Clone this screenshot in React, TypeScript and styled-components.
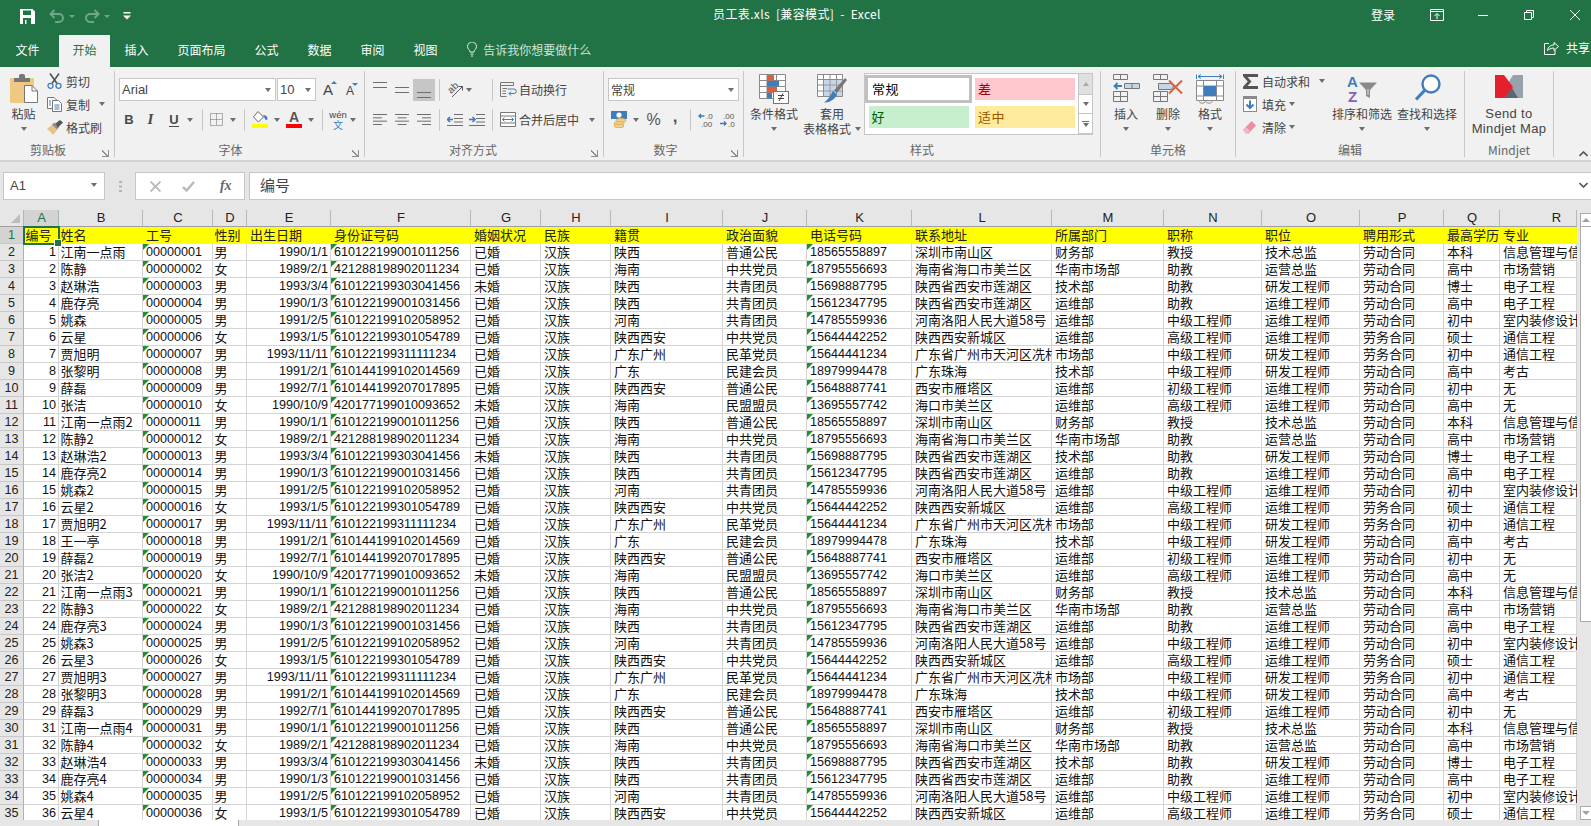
import React from 'react';
import styled, { createGlobalStyle } from 'styled-components';

const CJK = '"Noto Sans CJK SC", "Liberation Sans", sans-serif';
const SANS = '"Liberation Sans", "Noto Sans CJK SC", sans-serif';
const GREEN = '#217346';
const INK = '#444444';
const MID = '#6e6e6e';
const BLUE = '#3f7ebd';
const ORANGE = '#d9603b';

const Global = createGlobalStyle`
  html, body { margin: 0; padding: 0; background: #e6e6e6; }
  * { box-sizing: border-box; }
`;

const Page = styled.div`
  width: 1591px; height: 826px; overflow: hidden;
  display: flex; flex-direction: column;
  font-family: ${CJK}; font-size: 12px; color: ${INK};
`;

/* ---------- title + tabs ---------- */
const TitleBar = styled.div`
  height: 35px; flex: none; background: ${GREEN}; color: #fff;
  display: grid; grid-template-columns: 1fr auto 1fr; align-items: center;
`;
const Quick = styled.div`display: flex; align-items: center; padding: 0 0 3px 20px;`;
const QuickSlot = styled.span<{ $w: number }>`
  width: ${p => p.$w}px; flex: none; display: flex; align-items: center; justify-content: flex-start;
`;
const DimCaret = styled.span`
  width: 0; height: 0; border-left: 3px solid transparent; border-right: 3px solid transparent;
  border-top: 3px solid #6fa68a;
`;
const DocTitle = styled.div`white-space: pre; font-size: 12px; line-height: 16px; padding: 0 0 7px 3px; letter-spacing: 0.35px;`;
const WinControls = styled.div`display: flex; justify-content: flex-end; align-items: center; margin-right: -7px; padding-bottom: 6px;`;
const Login = styled.span`margin-right: 19px;`;
const WinBtn = styled.span`width: 46px; display: flex; justify-content: center; align-items: center;`;

const TabBar = styled.div`
  height: 32px; flex: none; background: ${GREEN}; display: flex; align-items: stretch; color: #fff;
`;
const Tab = styled.div<{ $active?: boolean }>`
  padding: 0 ${p => (p.$active ? '13.5px' : '14.5px')};
  display: flex; align-items: center; white-space: nowrap; padding-bottom: 3px;
  background: ${p => (p.$active ? '#f1f1f1' : 'transparent')};
  color: ${p => (p.$active ? GREEN : '#fff')};
`;
const FileTab = styled(Tab)`margin: 0 5px 0 1px;`;
const TellMe = styled.div`
  display: flex; align-items: center; gap: 6px; padding: 0 0 3px 15px; color: #cfe3d8;
`;
const Share = styled.div`
  margin-left: auto; display: flex; align-items: center; gap: 7px; padding-bottom: 7px; margin-right: 1px;
`;

/* ---------- ribbon ---------- */
const Ribbon = styled.div`
  height: 95px; flex: none; background: #f1f1f1; border-bottom: 2px solid #d2d2d2;
  display: flex; padding-top: 4px; position: relative;
`;
const Group = styled.div<{ $w: number }>`
  width: ${p => p.$w}px; flex: none; height: 86px; border-right: 1px solid #c8c8c8;
  display: flex; flex-direction: column; position: relative;
`;
const GroupBody = styled.div<{ $pl?: number; $center?: boolean }>`
  height: 72px; display: flex; padding-left: ${p => p.$pl ?? 0}px;
  justify-content: ${p => (p.$center ? 'center' : 'flex-start')};
`;
const GroupLabel = styled.div<{ $pr?: number }>`
  height: 14px; line-height: 14px; text-align: center; color: #666; white-space: nowrap;
  padding-right: ${p => p.$pr ?? 0}px;
`;
const Launcher = styled.span`
  position: absolute; right: 5px; bottom: 0; width: 7px; height: 7px;
  border-left: 1px solid #8e8e8e; border-bottom: 1px solid #8e8e8e;
  background: linear-gradient(135deg, transparent 45%, #8e8e8e 45%, #8e8e8e 60%, transparent 60%);
  transform: scaleX(-1);
`;
const Large = styled.div<{ $w: number }>`
  width: ${p => p.$w}px; flex: none; display: flex; flex-direction: column; align-items: center;
  padding-top: 3px;
`;
const LargeIcon = styled.div`height: 32px; display: flex; align-items: flex-start; justify-content: center;`;
const LargeText = styled.div`
  line-height: 15px; height: 15px; white-space: nowrap; text-align: center;
  display: flex; align-items: center; gap: 4px; justify-content: center;
`;
const LatinLarge = styled(LargeText)`font-family: ${SANS}; font-size: 13px; letter-spacing: 0.35px;`;
const Caret = styled.span`
  display: inline-block; flex: none; width: 0; height: 0;
  border-left: 3.5px solid transparent; border-right: 3.5px solid transparent; border-top: 4px solid ${MID};
`;
const Stack = styled.div<{ $w: number }>`
  width: ${p => p.$w}px; flex: none; display: flex; flex-direction: column; gap: 3px;
`;
const SmallRow = styled.div`height: 20px; display: flex; align-items: center; white-space: nowrap;`;
const SmallIcon = styled.span<{ $w?: number }>`
  width: ${p => p.$w ?? 19}px; flex: none; display: flex; align-items: center;
`;
const SmallCaret = styled.span<{ $ml: number }>`margin-left: ${p => p.$ml}px; display: flex;`;
const Rows = styled.div`display: flex; flex-direction: column; gap: 7px; padding-top: 7px;`;
const ToolRow = styled.div`height: 23px; display: flex; align-items: center; white-space: nowrap;`;
const Slot = styled.span<{ $w: number; $active?: boolean }>`
  width: ${p => p.$w}px; height: 22px; flex: none; display: flex; align-items: center; justify-content: center;
  background: ${p => (p.$active ? '#c6c6c6' : 'transparent')};
`;
const Sep = styled.span<{ $w: number }>`
  width: ${p => p.$w}px; flex: none; height: 22px; display: flex; justify-content: center;
  &::before { content: ''; width: 1px; height: 100%; background: #c8c8c8; }
`;
const Spacer = styled.span<{ $w: number }>`width: ${p => p.$w}px; flex: none;`;
const Select = styled.div<{ $w: number }>`
  width: ${p => p.$w}px; height: 23px; flex: none; background: #fff; border: 1px solid #c6c6c6;
  display: flex; align-items: center; justify-content: space-between; padding: 0 4px 0 2px;
  font-family: ${SANS}; font-size: 13px; color: ${INK};
`;
const CnSelect = styled(Select)`font-family: ${CJK}; font-size: 12px;`;
const FontAdjust = styled.span`position: relative; font-family: ${SANS}; font-size: 15px; color: ${INK}; line-height: 15px;`;
const SmallA = styled(FontAdjust)`font-size: 12px; margin-top: 3px;`;
const TinyArrow = styled.span<{ $down?: boolean }>`
  position: absolute; right: -4px; top: -1px; width: 0; height: 0;
  border-left: 3px solid transparent; border-right: 3px solid transparent;
  ${p => (p.$down ? `border-top: 3px solid ${BLUE};` : `border-bottom: 3px solid ${BLUE};`)}
`;
const StyleLetter = styled.span<{ $kind: 'b' | 'i' | 'u' }>`
  font-family: ${p => (p.$kind === 'i' ? '"Liberation Serif", serif' : SANS)};
  font-size: ${p => (p.$kind === 'i' ? 15 : 13)}px; font-weight: 700; color: #4a4a4a;
  font-style: ${p => (p.$kind === 'i' ? 'italic' : 'normal')};
  border-bottom: ${p => (p.$kind === 'u' ? '1.5px solid #4a4a4a' : 'none')};
  line-height: 13px;
`;
const ColorA = styled.span`
  width: 16px; display: flex; justify-content: center; font-family: ${SANS}; font-weight: 700;
  font-size: 14px; line-height: 13px; color: #555; border-bottom: 4px solid #f00;
`;
const Phonetic = styled.span`display: flex; flex-direction: column; align-items: center; line-height: 10px;`;
const Wen = styled.span`font-family: ${SANS}; font-size: 9.5px; color: #444;`;
const WenCn = styled.span`font-size: 10px; color: ${BLUE};`;
const Percent = styled.span`font-family: ${SANS}; font-size: 16px; color: #555;`;
const Comma = styled.span`font-family: ${SANS}; font-size: 17px; font-weight: 700; color: #555; line-height: 12px; margin-top: -6px;`;
const Gallery = styled.div`
  width: 229px; height: 62px; margin-top: 2px; flex: none; background: #fff; border: 1px solid #c6c6c6;
  display: flex; justify-content: space-between;
`;
const StyleGrid = styled.div`
  display: grid; grid-template-columns: 107px 100px; grid-template-rows: 28px 22px; gap: 3px;
  padding-top: 1px;
`;
const StyleCell = styled.div<{ $bg: string; $fg: string; $sel?: boolean }>`
  background: ${p => p.$bg}; color: ${p => p.$fg}; font-size: 13px; display: flex; align-items: center;
  width: ${p => (p.$sel ? 107 : 100)}px; height: ${p => (p.$sel ? 28 : 22)}px;
  align-self: center; justify-self: center; padding: 0 0 1px ${p => (p.$sel ? 4 : 3)}px;
  letter-spacing: 0.5px;
  border: ${p => (p.$sel ? '3px solid #c0c0c0' : 'none')};
`;
const GalleryScroll = styled.div`width: 14px; flex: none; display: flex; flex-direction: column; border-left: 1px solid #c6c6c6;`;
const GalleryBtn = styled.div<{ $h: number; $bg: string }>`
  height: ${p => p.$h}px; background: ${p => p.$bg}; border-bottom: 1px solid #c6c6c6;
  display: flex; align-items: center; justify-content: center; flex-direction: column; gap: 1px;
`;
const UpTri = styled.span`
  width: 0; height: 0; border-left: 3.5px solid transparent; border-right: 3.5px solid transparent;
  border-bottom: 4px solid #a8a8a8;
`;
const DashBar = styled.span`width: 7px; height: 1px; background: ${MID};`;
const Collapse = styled.span`position: absolute; right: 3px; bottom: 3px; display: flex;`;

/* ---------- formula bar ---------- */
const FormulaBar = styled.div`
  height: 48px; flex: none; padding: 10px 0 10px 3px; display: flex; align-items: stretch; background: #e6e6e6;
`;
const NameBox = styled.div`
  width: 102px; background: #fff; border: 1px solid #c6c6c6; display: flex; align-items: center;
  justify-content: space-between; padding: 0 7px 2px 6px; font-family: ${SANS}; font-size: 13px; color: ${INK};
`;
const Grip = styled.span`width: 30px; display: flex; align-items: center; justify-content: center;`;
const FxBox = styled.div`
  width: 110px; background: #fff; border: 1px solid #c6c6c6; display: flex; align-items: center;
  justify-content: space-around; padding: 0 2px 0 4px; margin-right: 4px;
`;
const FxText = styled.span`font-family: "Liberation Serif", serif; font-style: italic; font-weight: 700; font-size: 14px; color: #666; margin-left: 4px;`;
const FormulaInput = styled.div`
  flex: 1; background: #fff; border: 1px solid #c6c6c6; border-right: none; display: flex; align-items: center;
  justify-content: space-between; padding: 0 3px 3px 10px; font-size: 15px; color: ${INK};
`;

/* ---------- sheet ---------- */
const SheetArea = styled.div`height: 610px; flex: none; display: flex; background: #e6e6e6; overflow: hidden;`;
const GridWrap = styled.div`width: 1577px; flex: none; position: relative; overflow: hidden;`;
const COLS = [24, 35, 84, 70, 34, 84, 140, 70, 70, 112, 84, 105, 140, 112, 98, 98, 84, 56, 77];
const SheetGrid = styled.div`
  display: grid; grid-template-columns: ${COLS.map(c => `${c}px`).join(' ')}; grid-auto-rows: 17px;
  background: #fff; border-right: 1px solid #a0a0a0;
`;
const Corner = styled.div`
  background: #e6e6e6; border-right: 1px solid #b4b4b4; border-bottom: 1px solid #a0a0a0; position: relative;
  &::after {
    content: ''; position: absolute; right: 3px; bottom: 3px; width: 0; height: 0;
    border-left: 9px solid transparent; border-bottom: 9px solid #bcbcbc;
  }
`;
const ColHead = styled.div<{ $sel?: boolean; $shift?: number }>`
  background: ${p => (p.$sel ? '#d3d3d3' : '#e6e6e6')}; color: ${p => (p.$sel ? GREEN : '#222')};
  border-right: 1px solid ${p => (p.$sel ? '#9fb8aa' : '#b8b8b8')};
  border-bottom: 1px solid #a0a0a0;
  font-family: ${SANS}; font-size: 13px; line-height: 16px; text-align: center;
  padding-left: ${p => p.$shift ?? 1}px;
`;
const RowHead = styled.div<{ $sel?: boolean }>`
  background: ${p => (p.$sel ? '#d3d3d3' : '#e6e6e6')}; color: ${p => (p.$sel ? GREEN : '#222')};
  border-right: 1px solid #b0b0b0; border-bottom: 1px solid #c8c8c8;
  font-family: ${SANS}; font-size: 12.6px; line-height: 16px; text-align: center;
`;
const Cell = styled.div<{ $right?: boolean; $num?: boolean; $flag?: boolean; $tight?: boolean }>`
  position: relative; white-space: nowrap; background: #fff; color: #111;
  border-right: 1px solid #d4d4d4; border-bottom: 1px solid #d4d4d4;
  font-family: ${p => (p.$num ? SANS : CJK)}; font-size: ${p => (p.$num ? 12.6 : 13)}px; line-height: 16px;
  padding: 0 ${p => (p.$right ? 2 : 0)}px 0 ${p => (p.$right ? 0 : p.$tight ? 1.5 : 3)}px;
  text-align: ${p => (p.$right ? 'right' : 'left')};
  ${p => p.$flag && `
    &::before {
      content: ''; position: absolute; left: 0; top: 0; width: 0; height: 0;
      border-top: 6px solid #1f8f2f; border-right: 6px solid transparent;
    }
  `}
`;
const HeadCell = styled.div<{ $tight?: boolean }>`
  white-space: nowrap; background: #ffff00; color: #222; padding-left: ${p => (p.$tight ? 1.5 : 3)}px;
  font-size: 13px; line-height: 16px;
`;
const Selection = styled.div`
  position: absolute; left: 23px; top: 16px; width: 37px; height: 19px; border: 2px solid ${GREEN};
  &::after {
    content: ''; position: absolute; right: -4px; bottom: -4px; width: 6px; height: 6px;
    background: ${GREEN}; border: 1px solid #fff;
  }
`;
const VScroll = styled.div`
  margin-left: 3px; margin-top: 3px; width: 11px; flex: none; display: flex; flex-direction: column;
`;
const ScrollBtn = styled.div`
  height: 14px; flex: none; background: #fff; border: 1px solid #ababab; border-right: none;
  display: flex; align-items: center; justify-content: center;
`;
const VThumb = styled.div`height: 395px; flex: none; background: #fff; border: 1px solid #ababab; border-top: none; border-right: none;`;
const VTrack = styled.div`flex: 1;`;
const DownTri = styled.span`
  width: 0; height: 0; border-left: 4px solid transparent; border-right: 4px solid transparent;
  border-top: 4px solid #a0a0a0;
`;
const UpScrollTri = styled.span`
  width: 0; height: 0; border-left: 4px solid transparent; border-right: 4px solid transparent;
  border-bottom: 4px solid #a0a0a0;
`;
const HScroll = styled.div`
  height: 6px; flex: none; display: flex; background: #e6e6e6; padding-left: 98px;
`;
const HThumb = styled.div`
  width: 141px; background: #fff; border: 1px solid #ababab; border-bottom: none; border-top: none;
`;

/* ---------- drawn icons ---------- */
const Ln = ({ d, c = MID, w = 1 }: { d: string; c?: string; w?: number }) => (
  <path d={d} stroke={c} strokeWidth={w} fill="none" />
);
const SaveIcon = () => (
  <svg width="15" height="15" viewBox="0 0 15 15">
    <path fill="#fff" fillRule="evenodd" d="M0 0h12.5L15 2.5V15H0zM3 1.5V6h8V1.5zM3 9v6h2v-4h1.5v4H11V9z" />
  </svg>
);
const UndoIcon = ({ flip }: { flip?: boolean }) => (
  <svg width="16" height="14" viewBox="0 0 16 14" style={flip ? { transform: 'scaleX(-1)' } : undefined}>
    <Ln d="M5.5 1L1.5 5L5.5 9" c="#6fa68a" w={2} />
    <Ln d="M2 5H10A4 4 0 0 1 10 13H6" c="#6fa68a" w={2} />
  </svg>
);
const CustomizeIcon = () => (
  <svg width="8" height="8" viewBox="0 0 8 8"><rect width="7" height="1.5" x="0.5" fill="#fff" /><path d="M0 3.5H8L4 7.5z" fill="#fff" /></svg>
);
const RibbonOptIcon = () => (
  <svg width="14" height="12" viewBox="0 0 14 12">
    <Ln d="M.5.5H13.500V11.500H.5zM.5 2.500H13.500" c="#fff" /><Ln d="M7 10V5M4.500 7L7 4.500L9.500 7" c="#fff" />
  </svg>
);
const MinIcon = () => <svg width="10" height="10" viewBox="0 0 10 10"><Ln d="M0 5.500H10" c="#fff" /></svg>;
const MaxIcon = () => (
  <svg width="10" height="10" viewBox="0 0 10 10"><Ln d="M.5 2.500H7.500V9.500H.5zM2.500 2.500V.5H9.500V7.500H7.500" c="#fff" /></svg>
);
const CloseIcon = () => <svg width="10" height="10" viewBox="0 0 10 10"><Ln d="M0 0L10 10M10 0L0 10" c="#fff" /></svg>;
const BulbIcon = () => (
  <svg width="10" height="15" viewBox="0 0 10 15">
    <Ln d="M3 10C3 8 .5 7 .5 4.500A4.500 4.500 0 0 1 9.500 4.500C9.500 7 7 8 7 10zM3.500 12H6.500M4 14H6" c="#e4efe9" />
  </svg>
);
const ShareIcon = () => (
  <svg width="15" height="14" viewBox="0 0 15 14">
    <Ln d="M5 2.500H.5V13.500H11V9" c="#fff" /><Ln d="M3.500 9.500C4 5.500 7 4 10 4V1.500L14.500 5.500L10 9.500V7C7.500 7 5 8 3.500 9.500z" c="#fff" />
  </svg>
);
const PasteIcon = () => (
  <svg width="28" height="29" viewBox="0 0 28 29">
    <rect y="4" width="24" height="25" rx="1" fill="#efc981" />
    <path d="M4 4H9V1.500Q9 0 11 0H13Q15 0 15 1.500V4H20V8H4z" fill="#777" />
    <path d="M14.500 11.500H22L27.500 17V28.500H14.500z" fill="#fff" stroke="#777" />
    <path d="M22 11.500V17H27.500" fill="none" stroke="#777" />
  </svg>
);
const CutIcon = () => (
  <svg width="15" height="16" viewBox="0 0 15 16">
    <Ln d="M3 .5L10 10.500M12 .5L5 10.500" c="#555" w={1.6} />
    <circle cx="3.500" cy="12.800" r="2.500" fill="none" stroke={BLUE} strokeWidth="1.300" />
    <circle cx="11.500" cy="12.800" r="2.500" fill="none" stroke={BLUE} strokeWidth="1.300" />
  </svg>
);
const CopyIcon = () => (
  <svg width="15" height="15" viewBox="0 0 15 15">
    <path d="M.5.5H7L9.500 3V11.500H.5z" fill="#fff" stroke="#777" />
    <path d="M5.500 3.500H11.500L14.500 6.500V14.500H5.500z" fill="#fff" stroke="#777" />
    <Ln d="M2 4H4M2 6H4M2 8H4M7.500 8H12.500M7.500 10H12.500M7.500 12H12.500" c={BLUE} />
  </svg>
);
const BrushIcon = () => (
  <svg width="16" height="15" viewBox="0 0 16 15">
    <path d="M0 9L5.500 4.500L10.500 9.500L6 15Q4 12 0 9z" fill="#eac282" />
    <path d="M5 4.500L7.500 2.500L12 7L10 9.500z" fill="#8a8a8a" />
    <path d="M8.500 3.500L13 0L16 2.500L11 7.500z" fill="#555" />
  </svg>
);
const BorderIcon = () => (
  <svg width="13" height="13" viewBox="0 0 13 13">
    <path d="M.5.5H12.500V12.500H.5zM.5 6.500H12.500M6.500.5V12.500" fill="none" stroke="#666" strokeDasharray="1 1" />
  </svg>
);
const BucketIcon = () => (
  <svg width="16" height="17" viewBox="0 0 16 17">
    <path d="M6 .5L11.500 6L6.500 11L1.500 6z" fill="#fff" stroke="#666" />
    <path d="M11 4.500C13 3.500 15.500 5 15.500 7.500C15.500 9 14 9.500 13.500 8.500z" fill={BLUE} />
    <rect y="13" width="16" height="4" fill="#ffff00" />
  </svg>
);
const VAlignIcon = ({ y }: { y: number }) => (
  <svg width="14" height="18" viewBox="0 0 14 18"><Ln d={`M0 ${y}.5H14M0 ${y + 5}.5H14`} /></svg>
);
const HAlignIcon = ({ a }: { a: 'l' | 'c' | 'r' }) => {
  const x = (w: number) => (a === 'l' ? 0 : a === 'c' ? (14 - w) / 2 : 14 - w);
  const widths = [14, 9, 14, 9];
  return (
    <svg width="14" height="11" viewBox="0 0 14 11">
      {widths.map((w, i) => <Ln key={i} d={`M${x(w)} ${i * 3.33 + 0.5}h${w}`} />)}
    </svg>
  );
};
const OrientIcon = () => (
  <svg width="17" height="17" viewBox="0 0 17 17">
    <text x="1" y="11" fontFamily="Liberation Sans" fontSize="10" fill="#555" transform="rotate(-45 5 8)">ab</text>
    <Ln d="M5 16L15.500 5.500M11.500 5.500H15.500V9.500" c="#555" />
  </svg>
);
const IndentIcon = ({ inc }: { inc?: boolean }) => (
  <svg width="16" height="12" viewBox="0 0 16 12">
    <Ln d="M7 .5H16M7 4.500H16M7 8H16M0 11.500H16" c={MID} />
    {inc
      ? <Ln d="M0 5.500H6M3.500 3L6 5.500L3.500 8" c={BLUE} w={1.6} />
      : <Ln d="M6 5.500H.5M3 3L.5 5.500L3 8" c={BLUE} w={1.6} />}
  </svg>
);
const WrapIcon = () => (
  <svg width="17" height="15" viewBox="0 0 17 15">
    <Ln d="M.5.5H13.500V3.500H.5zM.5 3.500V14.500H6.500M2.500 6.500H7M2.500 9H6M2.500 11.500H6" c="#777" />
    <Ln d="M7.500 7H14A2 2 0 0 1 14 11.500H9M11 9.500L9 11.500L11 13.500" c={BLUE} />
  </svg>
);
const MergeIcon = () => (
  <svg width="16" height="15" viewBox="0 0 16 15">
    <path d="M.5.5H15.500V14.500H.5zM.5 4H15.500M.5 11H15.500" fill="#fff" stroke="#777" />
    <Ln d="M2.500 7.500H13.500M4.500 5.500L2.500 7.500L4.500 9.500M11.500 5.500L13.500 7.500L11.500 9.500" c={BLUE} />
  </svg>
);
const MoneyIcon = () => (
  <svg width="16" height="17" viewBox="0 0 16 17">
    <rect width="16" height="8" fill={BLUE} />
    <circle cx="8" cy="4" r="2.600" fill="#fff" />
    <ellipse cx="10" cy="9.500" rx="5" ry="2" fill="#f1d08f" stroke="#e2b15e" />
    <ellipse cx="8" cy="12.500" rx="5" ry="2" fill="#f1d08f" stroke="#e2b15e" />
    <ellipse cx="8" cy="15" rx="5" ry="1.800" fill="#f1d08f" stroke="#e2b15e" />
  </svg>
);
const DecIcon = ({ more }: { more?: boolean }) => (
  <svg width="15" height="14" viewBox="0 0 15 14">
    <g fontFamily="Liberation Sans" fontSize="8" fill="#555">
      <text x={more ? 8 : 3} y="6">{more ? '.0' : '.00'}</text>
      <text x={more ? 3 : 8} y="13.500">{more ? '.00' : '.0'}</text>
    </g>
    {more
      ? <Ln d="M6.500 3H1M3 1L1 3L3 5" c={BLUE} w={1.4} />
      : <Ln d="M0 10.500H6M4 8.500L6 10.500L4 12.500" c={BLUE} w={1.4} />}
  </svg>
);
const CondIcon = () => (
  <svg width="30" height="30" viewBox="0 0 30 30">
    <path d="M.5.5H26.500V24.500H.5zM.5 6.500H26.500M.5 12.500H26.500M.5 18.500H26.500M8 .5V24.500M17.500 .5V18" fill="#fff" stroke="#8a8a8a" />
    <rect x="8" y="1" width="7" height="5.500" fill={ORANGE} />
    <rect x="8" y="7" width="12" height="5.500" fill={BLUE} />
    <rect x="8" y="13" width="10" height="5.500" fill={ORANGE} />
    <rect x="8" y="19" width="5" height="5.500" fill={BLUE} />
    <rect x="14.500" y="17.500" width="15" height="12" fill="#fff" stroke="#777" />
    <Ln d="M19 21.500H25M19 24.500H25M24 19.500L20 27" c="#444" />
  </svg>
);
const TableFormatIcon = () => (
  <svg width="30" height="30" viewBox="0 0 30 30">
    <path d="M.5.5H25.500V22.500H.5zM.5 5.500H25.500M.5 11H25.500M.5 17H25.500M6.500.5V22.500M13 .5V22.500M19.500 .5V22.500" fill="#fff" stroke="#8a8a8a" />
    <rect x="7" y="6" width="18" height="16" fill="#c5d5ea" />
    <Ln d="M7 11H25M7 17H25M13 6V22M19.500 6V22" c="#9a9a9a" />
    <path d="M28 4L30 6L20 19L17 16.500z" fill="#777" />
    <path d="M16 17L20 20.500C18 25 13 29 7 28.500C11 26 13 22 16 17z" fill={BLUE} />
  </svg>
);
const InsertIcon = () => (
  <svg width="27" height="28" viewBox="0 0 27 28">
    <Ln d="M.5.5H14.500V5.500H.5zM7.500 .5V5.500M.5 17.500H14.500V27.500H.5zM.5 22.500H14.500M7.500 17.500V27.500" c="#777" />
    <path d="M11.500 9.500H26.500V14.500H11.500z" fill="#c5d5ea" stroke="#777" />
    <Ln d="M19 9.500V14.500" c="#777" />
    <Ln d="M9 12H1.500M4.500 9L1.500 12L4.500 15" c={BLUE} w={1.8} />
  </svg>
);
const DeleteIcon = () => (
  <svg width="30" height="28" viewBox="0 0 30 28">
    <Ln d="M.5.5H14.500V5.500H.5zM7.500 .5V5.500M.5 17.500H14.500V27.500H.5zM.5 22.500H14.500M7.500 17.500V27.500" c="#777" />
    <path d="M5.500 9.500H18L21 12L18 15.500H5.500z" fill="#c5d5ea" stroke="#777" />
    <Ln d="M16 6.500L29 19.500M29 6.500L16 19.500" c={ORANGE} w={2} />
  </svg>
);
const CellFormatIcon = () => (
  <svg width="28" height="31" viewBox="0 0 28 31">
    <Ln d="M.5.5V5M27.500 .5V5M2 2.500H26M5 .5L2 2.500L5 4.500M23 .5L26 2.500L23 4.500" c={BLUE} />
    <path d="M.5 6.500H27.500V26.500H.5zM7.500 6.500V26.500M20.500 6.500V26.500M.5 12H27.500M.5 22H27.500" fill="#fff" stroke="#8a8a8a" />
    <rect x="8" y="12" width="12" height="10" fill={BLUE} />
    <Ln d="M3 27.500Q6 31 9.500 27.500Q13 31 16.500 27.500" c="#8a8a8a" />
  </svg>
);
const SigmaIcon = () => (
  <svg width="15" height="15" viewBox="0 0 15 15">
    <path fill="#555" d="M0 0H15V3H4.500L8.500 7.500L4.500 12H15V15H0V12.800L4.800 7.500L0 2.200z" />
  </svg>
);
const FillIcon = () => (
  <svg width="14" height="16" viewBox="0 0 14 16">
    <rect x=".5" y=".5" width="13" height="15" fill="#fff" stroke="#8a8a8a" />
    <rect width="14" height="3" fill="#8a8a8a" />
    <Ln d="M7 4.500V12M3.500 8.500L7 12L10.500 8.500" c={BLUE} w={2} />
  </svg>
);
const EraserIcon = () => (
  <svg width="13" height="13" viewBox="0 0 13 13">
    <path d="M8.500 0L13 4.500L5.500 12.500L3 12.500L0 9z" fill="#e98fa0" />
    <path d="M0 9L3 6L7 10L4.500 12.500H3z" fill="#f3b9c3" />
  </svg>
);
const SortIcon = () => (
  <svg width="30" height="28" viewBox="0 0 30 28">
    <text x="0" y="13" fontFamily="Liberation Sans" fontWeight="700" fontSize="15" fill={BLUE}>A</text>
    <text x="1" y="27.500" fontFamily="Liberation Sans" fontWeight="700" fontSize="15" fill="#8a5cb5">Z</text>
    <path d="M12 8.500H30L23 16V24L19 22V16z" fill="#8a8a8a" />
    <path d="M20.500 15H21.500V21H20.500z" fill="#e6e6e6" />
  </svg>
);
const FindIcon = () => (
  <svg width="27" height="27" viewBox="0 0 27 27">
    <circle cx="17" cy="10" r="8.500" fill="#fff" stroke={BLUE} strokeWidth="2.400" />
    <Ln d="M11 16L2 25.500" c={BLUE} w={3.200} />
  </svg>
);
const MindjetIcon = () => (
  <svg width="28" height="25" viewBox="0 0 28 25">
    <path d="M18 1H28V24H22L13 9z" fill="#96a2ac" />
    <path d="M8 24L16 12L23 24z" fill="#5a6772" />
    <path d="M0 1H9L18 13L9 24H0z" fill="#e6202a" />
  </svg>
);
const XIcon = () => <svg width="11" height="11" viewBox="0 0 11 11"><Ln d="M.5.5L10.500 10.500M10.500 .5L.5 10.500" c="#b8b8b8" w={1.8} /></svg>;
const CheckIcon = () => <svg width="13" height="11" viewBox="0 0 13 11"><Ln d="M1 6L4.500 9.500L12 1" c="#b8b8b8" w={2.400} /></svg>;
const GripIcon = () => (
  <svg width="3" height="11" viewBox="0 0 3 11"><path d="M0 0h3v2H0zM0 4.500h3v2H0zM0 9h3v2H0z" fill="#b4b4b4" /></svg>
);
const ChevronIcon = ({ up, c = '#555' }: { up?: boolean; c?: string }) => (
  <svg width="9" height="6" viewBox="0 0 9 6">
    <Ln d={up ? 'M.5 5L4.500 1L8.500 5' : 'M.5 1L4.500 5L8.500 1'} c={c} w={1.6} />
  </svg>
);

/* ---------- data ---------- */
type Rec = { name: string; sex: string; birth: string; idc: string; mar: string; from: string; pol: string; tel: string; addr: string; dept: string; title: string; job: string; con: string; edu: string; major: string };
const r = (name: string, sex: string, birth: string, idc: string, mar: string, from: string, pol: string, tel: string, addr: string, dept: string, title: string, job: string, con: string, edu: string, major: string): Rec =>
  ({ name, sex, birth, idc, mar, from, pol, tel, addr, dept, title, job, con, edu, major });
const BASE: Rec[] = [
  r('江南一点雨', '男', '1990/1/1', '610122199001011256', '已婚', '陕西', '普通公民', '18565558897', '深圳市南山区', '财务部', '教授', '技术总监', '劳动合同', '本科', '信息管理与信息系统'),
  r('陈静', '女', '1989/2/1', '421288198902011234', '已婚', '海南', '中共党员', '18795556693', '海南省海口市美兰区', '华南市场部', '助教', '运营总监', '劳动合同', '高中', '市场营销'),
  r('赵琳浩', '男', '1993/3/4', '610122199303041456', '未婚', '陕西', '共青团员', '15698887795', '陕西省西安市莲湖区', '技术部', '助教', '研发工程师', '劳动合同', '博士', '电子工程'),
  r('鹿存亮', '男', '1990/1/3', '610122199001031456', '已婚', '陕西', '共青团员', '15612347795', '陕西省西安市莲湖区', '运维部', '助教', '运维工程师', '劳动合同', '高中', '电子工程'),
  r('姚森', '男', '1991/2/5', '610122199102058952', '已婚', '河南', '共青团员', '14785559936', '河南洛阳人民大道58号', '运维部', '中级工程师', '运维工程师', '劳动合同', '初中', '室内装修设计'),
  r('云星', '女', '1993/1/5', '610122199301054789', '已婚', '陕西西安', '中共党员', '15644442252', '陕西西安新城区', '运维部', '高级工程师', '运维工程师', '劳务合同', '硕士', '通信工程'),
  r('贾旭明', '男', '1993/11/11', '610122199311111234', '已婚', '广东广州', '民革党员', '15644441234', '广东省广州市天河区冼村', '市场部', '中级工程师', '研发工程师', '劳务合同', '初中', '通信工程'),
  r('张黎明', '男', '1991/2/1', '610144199102014569', '已婚', '广东', '民建会员', '18979994478', '广东珠海', '技术部', '中级工程师', '研发工程师', '劳动合同', '高中', '考古'),
  r('薛磊', '男', '1992/7/1', '610144199207017895', '已婚', '陕西西安', '普通公民', '15648887741', '西安市雁塔区', '运维部', '初级工程师', '运维工程师', '劳动合同', '初中', '无'),
  r('张洁', '女', '1990/10/9', '420177199010093652', '未婚', '海南', '民盟盟员', '13695557742', '海口市美兰区', '运维部', '高级工程师', '运维工程师', '劳动合同', '高中', '无'),
];
const IDS = [
  ...Array.from({ length: 22 }, (_, i) => i + 1),
  ...Array.from({ length: 6 }, (_, i) => i + 24),
  ...Array.from({ length: 6 }, (_, i) => i + 31),
];
const LETTERS = 'ABCDEFGHIJKLMNOPQR'.split('');
const HEADS = ['编号', '姓名', '工号', '性别', '出生日期', '身份证号码', '婚姻状况', '民族', '籍贯', '政治面貌', '电话号码', '联系地址', '所属部门', '职称', '职位', '聘用形式', '最高学历', '专业'];

const rowName = (id: number, rec: Rec) => {
  if (id === 18) return '王一亭';
  const round = Math.floor((id - 1) / 10);
  return rec.name + (round > 0 ? String(round + 1) : '');
};

const DataRow = ({ id, row }: { id: number; row: number }) => {
  const rec = BASE[(id - 1) % 10];
  return (
    <>
      <RowHead>{row}</RowHead>
      <Cell $right $num>{id}</Cell>
      <Cell $tight>{rowName(id, rec)}</Cell>
      <Cell $num $flag>{String(id).padStart(8, '0')}</Cell>
      <Cell $tight>{rec.sex}</Cell>
      <Cell $right $num>{rec.birth}</Cell>
      <Cell $num $flag>{rec.idc}</Cell>
      <Cell>{rec.mar}</Cell>
      <Cell>汉族</Cell>
      <Cell>{rec.from}</Cell>
      <Cell>{rec.pol}</Cell>
      <Cell $num $flag>{rec.tel}</Cell>
      <Cell>{rec.addr}</Cell>
      <Cell>{rec.dept}</Cell>
      <Cell>{rec.title}</Cell>
      <Cell>{rec.job}</Cell>
      <Cell>{rec.con}</Cell>
      <Cell>{rec.edu}</Cell>
      <Cell>{rec.major}</Cell>
    </>
  );
};

export default function App() {
  return (
    <Page>
      <Global />
      <TitleBar>
        <Quick>
          <QuickSlot $w={29}><SaveIcon /></QuickSlot>
          <QuickSlot $w={20}><UndoIcon /></QuickSlot>
          <QuickSlot $w={15}><DimCaret /></QuickSlot>
          <QuickSlot $w={20}><UndoIcon flip /></QuickSlot>
          <QuickSlot $w={19}><DimCaret /></QuickSlot>
          <QuickSlot $w={10}><CustomizeIcon /></QuickSlot>
        </Quick>
        <DocTitle>{'员工表.xls  [兼容模式]  -  Excel'}</DocTitle>
        <WinControls>
          <Login>登录</Login>
          <WinBtn><RibbonOptIcon /></WinBtn>
          <WinBtn><MinIcon /></WinBtn>
          <WinBtn><MaxIcon /></WinBtn>
          <WinBtn><CloseIcon /></WinBtn>
        </WinControls>
      </TitleBar>
      <TabBar>
        <FileTab>文件</FileTab>
        <Tab $active>开始</Tab>
        <Tab>插入</Tab>
        <Tab>页面布局</Tab>
        <Tab>公式</Tab>
        <Tab>数据</Tab>
        <Tab>审阅</Tab>
        <Tab>视图</Tab>
        <TellMe><BulbIcon />告诉我你想要做什么</TellMe>
        <Share><ShareIcon />共享</Share>
      </TabBar>

      <Ribbon>
        <Group $w={115}>
          <GroupBody $pl={0}>
            <Large $w={47}>
              <LargeIcon><PasteIcon /></LargeIcon>
              <LargeText>粘贴</LargeText>
              <LargeText><Caret /></LargeText>
            </Large>
            <Stack $w={66}>
              <SmallRow><SmallIcon><CutIcon /></SmallIcon>剪切</SmallRow>
              <SmallRow><SmallIcon><CopyIcon /></SmallIcon>复制<SmallCaret $ml={9}><Caret /></SmallCaret></SmallRow>
              <SmallRow><SmallIcon><BrushIcon /></SmallIcon>格式刷</SmallRow>
            </Stack>
          </GroupBody>
          <GroupLabel $pr={18}>剪贴板</GroupLabel>
          <Launcher />
        </Group>

        <Group $w={250}>
          <GroupBody $pl={4}>
            <Rows>
              <ToolRow>
                <Select $w={157}>Arial<Caret /></Select>
                <Spacer $w={1} />
                <Select $w={39}>10<Caret /></Select>
                <Slot $w={24}><FontAdjust>A<TinyArrow /></FontAdjust></Slot>
                <Slot $w={20}><SmallA>A<TinyArrow $down /></SmallA></Slot>
              </ToolRow>
              <ToolRow>
                <Slot $w={20}><StyleLetter $kind="b">B</StyleLetter></Slot>
                <Slot $w={23}><StyleLetter $kind="i">I</StyleLetter></Slot>
                <Slot $w={24}><StyleLetter $kind="u">U</StyleLetter></Slot>
                <Slot $w={8}><Caret /></Slot>
                <Sep $w={16} />
                <Slot $w={13}><BorderIcon /></Slot>
                <Slot $w={20}><Caret /></Slot>
                <Sep $w={3} />
                <Slot $w={28}><BucketIcon /></Slot>
                <Slot $w={5}><Caret /></Slot>
                <Slot $w={30}><ColorA>A</ColorA></Slot>
                <Slot $w={3}><Caret /></Slot>
                <Sep $w={20} />
                <Slot $w={12}><Phonetic><Wen>wén</Wen><WenCn>文</WenCn></Phonetic></Slot>
                <Slot $w={18}><Caret /></Slot>
              </ToolRow>
            </Rows>
          </GroupBody>
          <GroupLabel $pr={18}>字体</GroupLabel>
          <Launcher />
        </Group>

        <Group $w={239}>
          <GroupBody $pl={4}>
            <Rows>
              <ToolRow>
                <Slot $w={22}><VAlignIcon y={1} /></Slot>
                <Slot $w={22}><VAlignIcon y={6} /></Slot>
                <Slot $w={22} $active><VAlignIcon y={11} /></Slot>
                <Sep $w={9} />
                <Slot $w={22}><OrientIcon /></Slot>
                <Slot $w={6}><Caret /></Slot>
                <Spacer $w={13} />
                <Sep $w={15} />
                <SmallIcon><WrapIcon /></SmallIcon>自动换行
              </ToolRow>
              <ToolRow>
                <Slot $w={22}><HAlignIcon a="l" /></Slot>
                <Slot $w={22}><HAlignIcon a="c" /></Slot>
                <Slot $w={22}><HAlignIcon a="r" /></Slot>
                <Sep $w={9} />
                <Slot $w={22}><IndentIcon /></Slot>
                <Slot $w={22}><IndentIcon inc /></Slot>
                <Sep $w={9} />
                <Spacer $w={3} />
                <SmallIcon><MergeIcon /></SmallIcon>合并后居中
                <SmallCaret $ml={10}><Caret /></SmallCaret>
              </ToolRow>
            </Rows>
          </GroupBody>
          <GroupLabel $pr={22}>对齐方式</GroupLabel>
          <Launcher />
        </Group>

        <Group $w={140}>
          <GroupBody $pl={4}>
            <Rows>
              <ToolRow>
                <CnSelect $w={131}>常规<Caret /></CnSelect>
              </ToolRow>
              <ToolRow>
                <Slot $w={22}><MoneyIcon /></Slot>
                <Slot $w={11}><Caret /></Slot>
                <Slot $w={25}><Percent>%</Percent></Slot>
                <Slot $w={18}><Comma>,</Comma></Slot>
                <Sep $w={13} />
                <Slot $w={16}><DecIcon more /></Slot>
                <Slot $w={28}><DecIcon /></Slot>
              </ToolRow>
            </Rows>
          </GroupBody>
          <GroupLabel $pr={16}>数字</GroupLabel>
          <Launcher />
        </Group>

        <Group $w={357}>
          <GroupBody>
            <Large $w={60}>
              <LargeIcon><CondIcon /></LargeIcon>
              <LargeText>条件格式</LargeText>
              <LargeText><Caret /></LargeText>
            </Large>
            <Large $w={56}>
              <LargeIcon><TableFormatIcon /></LargeIcon>
              <LargeText>套用</LargeText>
              <LargeText>表格格式<Caret /></LargeText>
            </Large>
            <Spacer $w={4} />
            <Gallery>
              <StyleGrid>
                <StyleCell $sel $bg="#fff" $fg="#000">常规</StyleCell>
                <StyleCell $bg="#ffc7ce" $fg="#9c0006">差</StyleCell>
                <StyleCell $bg="#c6efce" $fg="#006100">好</StyleCell>
                <StyleCell $bg="#ffeb9c" $fg="#9c5700">适中</StyleCell>
              </StyleGrid>
              <GalleryScroll>
                <GalleryBtn $h={21} $bg="#e0e0e0"><UpTri /></GalleryBtn>
                <GalleryBtn $h={19} $bg="#fff"><Caret /></GalleryBtn>
                <GalleryBtn $h={20} $bg="#fff"><DashBar /><Caret /></GalleryBtn>
              </GalleryScroll>
            </Gallery>
          </GroupBody>
          <GroupLabel>样式</GroupLabel>
        </Group>

        <Group $w={135}>
          <GroupBody $pl={4}>
            <Large $w={42}>
              <LargeIcon><InsertIcon /></LargeIcon>
              <LargeText>插入</LargeText>
              <LargeText><Caret /></LargeText>
            </Large>
            <Large $w={42}>
              <LargeIcon><DeleteIcon /></LargeIcon>
              <LargeText>删除</LargeText>
              <LargeText><Caret /></LargeText>
            </Large>
            <Large $w={42}>
              <LargeIcon><CellFormatIcon /></LargeIcon>
              <LargeText>格式</LargeText>
              <LargeText><Caret /></LargeText>
            </Large>
          </GroupBody>
          <GroupLabel>单元格</GroupLabel>
        </Group>

        <Group $w={229}>
          <GroupBody $pl={7}>
            <Stack $w={87}>
              <SmallRow><SmallIcon><SigmaIcon /></SmallIcon>自动求和<SmallCaret $ml={9}><Caret /></SmallCaret></SmallRow>
              <SmallRow><SmallIcon><FillIcon /></SmallIcon>填充<SmallCaret $ml={3}><Caret /></SmallCaret></SmallRow>
              <SmallRow><SmallIcon><EraserIcon /></SmallIcon>清除<SmallCaret $ml={3}><Caret /></SmallCaret></SmallRow>
            </Stack>
            <Large $w={64}>
              <LargeIcon><SortIcon /></LargeIcon>
              <LargeText>排序和筛选</LargeText>
              <LargeText><Caret /></LargeText>
            </Large>
            <Large $w={66}>
              <LargeIcon><FindIcon /></LargeIcon>
              <LargeText>查找和选择</LargeText>
              <LargeText><Caret /></LargeText>
            </Large>
          </GroupBody>
          <GroupLabel>编辑</GroupLabel>
        </Group>

        <Group $w={89}>
          <GroupBody $center>
            <Large $w={89}>
              <LargeIcon><MindjetIcon /></LargeIcon>
              <LatinLarge>Send to</LatinLarge>
              <LatinLarge>Mindjet Map</LatinLarge>
            </Large>
          </GroupBody>
          <GroupLabel>Mindjet</GroupLabel>
        </Group>
        <Collapse><ChevronIcon up /></Collapse>
      </Ribbon>

      <FormulaBar>
        <NameBox>A1<Caret /></NameBox>
        <Grip><GripIcon /></Grip>
        <FxBox><XIcon /><CheckIcon /><FxText>fx</FxText></FxBox>
        <FormulaInput>编号<ChevronIcon /></FormulaInput>
      </FormulaBar>

      <SheetArea>
        <GridWrap>
          <SheetGrid>
            <Corner />
            {LETTERS.map((l, i) => <ColHead key={l} $sel={i === 0} $shift={l === 'R' ? 37 : 1}>{l}</ColHead>)}
            <RowHead $sel>1</RowHead>
            {HEADS.map((h, i) => <HeadCell key={h} $tight={i === 0 || i === 1 || i === 3}>{h}</HeadCell>)}
            {IDS.map((id, i) => <DataRow key={id} id={id} row={i + 2} />)}
          </SheetGrid>
          <Selection />
        </GridWrap>
        <VScroll>
          <ScrollBtn><UpScrollTri /></ScrollBtn>
          <VThumb />
          <VTrack />
          <ScrollBtn><DownTri /></ScrollBtn>
        </VScroll>
      </SheetArea>
      <HScroll><HThumb /></HScroll>
    </Page>
  );
}
